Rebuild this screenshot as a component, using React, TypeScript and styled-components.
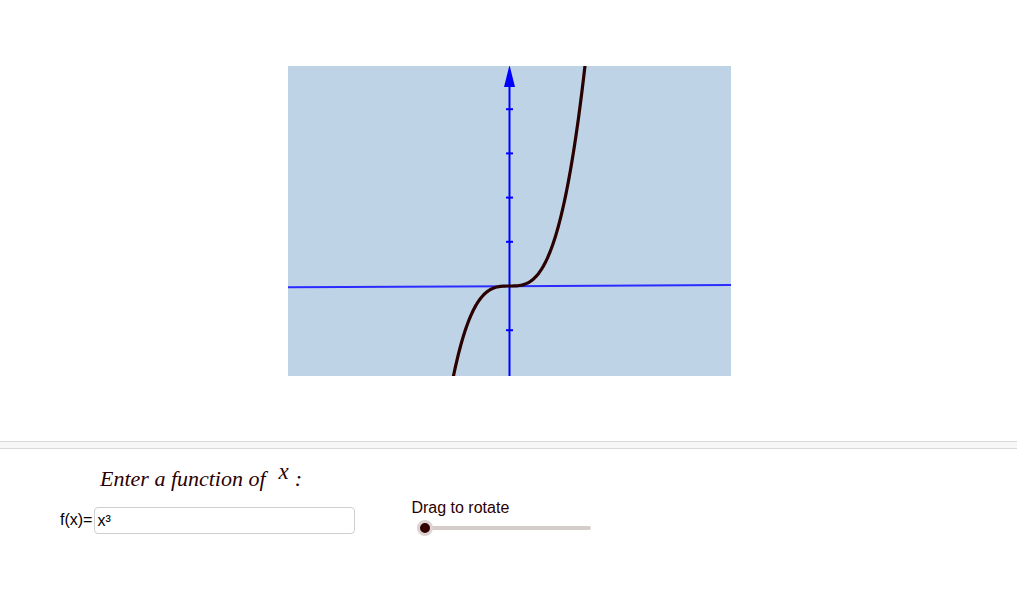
import React, { useState } from 'react';
import styled, { createGlobalStyle } from 'styled-components';

const GlobalStyle = createGlobalStyle`
  html, body {
    margin: 0;
    padding: 0;
    background: #ffffff;
  }
  body {
    font-family: 'Liberation Sans', Arial, sans-serif;
    color: #2b0000;
  }
`;

const Page = styled.div`
  width: 1019px;
  height: 595px;
  overflow: hidden;
`;

const GraphArea = styled.div`
  height: 441px;
  box-sizing: border-box;
  padding-top: 66px;
  display: flex;
  justify-content: center;
  align-items: flex-start;
`;

const Divider = styled.div`
  width: 1017px;
  height: 6px;
  background: #f7f7f7;
  border-top: 1px solid #d9d9d9;
  border-bottom: 1px solid #d9d9d9;
`;

const Controls = styled.div`
  display: flex;
  align-items: flex-start;
`;

const InputColumn = styled.div`
  display: flex;
  flex-direction: column;
  padding-left: 60px;
  padding-top: 18px;
`;

const Prompt = styled.div`
  padding-left: 40px;
  font-family: 'Liberation Serif', 'Times New Roman', serif;
  font-style: italic;
  font-size: 22px;
  line-height: 24px;
  color: #2b0000;
`;

const MathVar = styled.span`
  display: inline-block;
  font-family: 'Liberation Serif', 'Times New Roman', serif;
  font-style: italic;
  font-size: 23px;
  line-height: 0;
  vertical-align: 7px;
  margin: 0 6px 0 13px;
`;

const InputRow = styled.label`
  display: flex;
  align-items: center;
  margin-top: 16px;
`;

const FieldLabel = styled.span`
  font-size: 16px;
  line-height: 18px;
  color: #000000;
  margin-right: 2px;
  margin-top: -2px;
`;

const FieldInput = styled.input`
  box-sizing: border-box;
  width: 261px;
  height: 27px;
  border: 1px solid #cfcfcf;
  border-radius: 4px;
  padding: 0 2px;
  font-family: 'Liberation Sans', Arial, sans-serif;
  font-size: 16px;
  color: #000000;
  background: #ffffff;
  outline: none;
`;

const SliderColumn = styled.div`
  display: flex;
  flex-direction: column;
  margin-left: 56px;
  padding-top: 50px;
`;

const SliderLabel = styled.div`
  font-size: 16px;
  line-height: 18px;
  color: #2b0000;
`;

const Range = styled.input`
  -webkit-appearance: none;
  appearance: none;
  width: 174px;
  height: 16px;
  margin: 3px 0 0 6px;
  padding: 0;
  background: transparent;
  outline: none;

  &::-webkit-slider-runnable-track {
    height: 4px;
    border-radius: 2px;
    background: #d5cccc;
  }

  &::-webkit-slider-thumb {
    -webkit-appearance: none;
    appearance: none;
    box-sizing: border-box;
    width: 16px;
    height: 16px;
    margin-top: -6px;
    border-radius: 50%;
    background: #330000;
    border: 3px solid #ddd3d3;
    cursor: pointer;
  }
`;

const W = 443;
const H = 310;
const OX = 221.5;
const OY = 220;
const S = 44.2;

function curvePath(): string {
  const pts: string[] = [];
  const xMin = -Math.cbrt((H - OY) / S) - 0.02;
  const xMax = Math.cbrt(OY / S) + 0.02;
  const n = 160;
  for (let i = 0; i <= n; i++) {
    const x = xMin + ((xMax - xMin) * i) / n;
    const px = OX + x * S;
    const py = OY - x * x * x * S;
    pts.push(`${i === 0 ? 'M' : 'L'}${px.toFixed(2)},${py.toFixed(2)}`);
  }
  return pts.join(' ');
}

const Graph = () => {
  const ticks = [-1, 1, 2, 3, 4];
  return (
    <svg width={W} height={H} viewBox={`0 0 ${W} ${H}`}>
      <defs>
        <clipPath id="plot">
          <rect x="0" y="0" width={W} height={H} />
        </clipPath>
      </defs>
      <rect x="0" y="0" width={W} height={H} fill="#bed4e6" />
      <g clipPath="url(#plot)">
        <line x1="0" y1={OY + 1.3} x2={W} y2={OY - 1} stroke="#2b2bff" strokeWidth="2" />
        <line x1={OX} y1="20" x2={OX} y2={H} stroke="#0000ff" strokeWidth="2" />
        <polygon points={`${OX},-1 ${OX - 5.5},21 ${OX + 5.5},21`} fill="#0000ff" />
        {ticks.map((t) => (
          <line
            key={t}
            x1={OX - 3.5}
            x2={OX + 3.5}
            y1={OY - t * S}
            y2={OY - t * S}
            stroke="#0000ff"
            strokeWidth="2"
          />
        ))}
        <path d={curvePath()} fill="none" stroke="#2a0000" strokeWidth="3.2" strokeLinecap="butt" />
      </g>
    </svg>
  );
};

export default function App() {
  const [expr, setExpr] = useState('x³');
  const [angle, setAngle] = useState(0);

  return (
    <Page>
      <GlobalStyle />
      <GraphArea>
        <Graph />
      </GraphArea>
      <Divider />
      <Controls>
        <InputColumn>
          <Prompt>
            Enter a function of<MathVar>x</MathVar>:
          </Prompt>
          <InputRow>
            <FieldLabel>f(x)=</FieldLabel>
            <FieldInput value={expr} onChange={(e) => setExpr(e.target.value)} />
          </InputRow>
        </InputColumn>
        <SliderColumn>
          <SliderLabel>Drag to rotate</SliderLabel>
          <Range
            type="range"
            min={0}
            max={360}
            value={angle}
            onChange={(e) => setAngle(Number(e.target.value))}
          />
        </SliderColumn>
      </Controls>
    </Page>
  );
}
